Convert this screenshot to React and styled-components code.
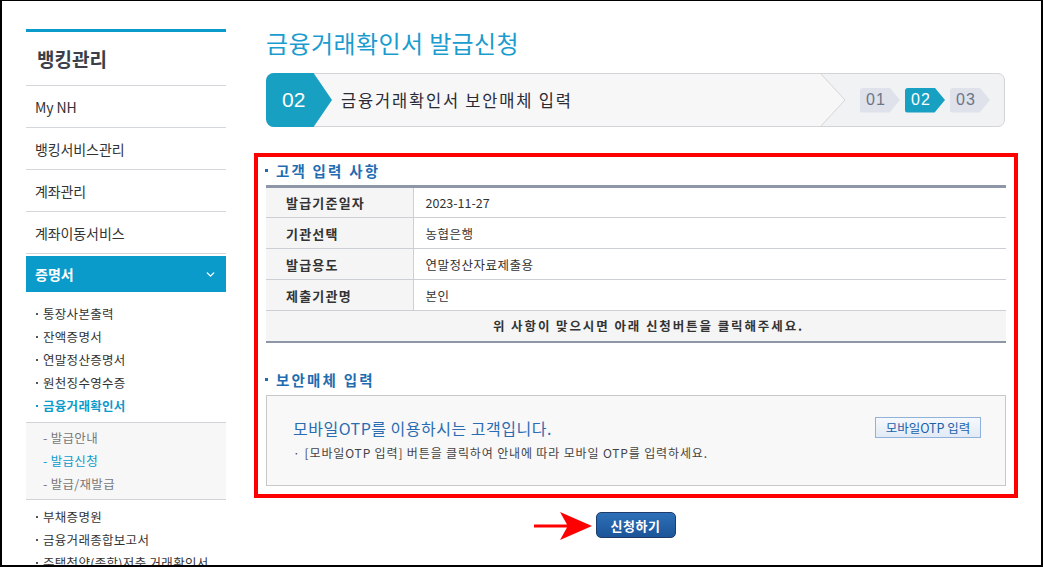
import React from 'react';
import styled, { createGlobalStyle } from 'styled-components';
import { ChevronDown } from 'lucide-react';

const GlobalStyle = createGlobalStyle`
    * { box-sizing: border-box; }
    body {
        margin: 0;
        background: #fff;
        font-family: "Noto Sans CJK KR", "Noto Sans", "Liberation Sans", sans-serif;
        color: #333;
    }
`;

const Frame = styled.div`
    width: 1043px;
    height: 567px;
    border: 2px solid #000;
    border-top-width: 1px;
    overflow: hidden;
    display: flex;
    align-items: flex-start;
`;

// sidebar
const Sidebar = styled.aside`
    width: 200px;
    margin-left: 24px;
    padding-top: 28px;
    flex-shrink: 0;
`;

const SideTitle = styled.h2`
    margin: 0;
    height: 57px;
    border-top: 3px solid #0b9bcb;
    border-bottom: 1px solid #d3d6db;
    padding-left: 11px;
    display: flex;
    align-items: center;
    font-size: 19px;
    font-weight: 700;
    color: #3a3f4a;
    letter-spacing: 0;
`;

const SideItem = styled.div`
    height: 42px;
    border-bottom: 1px solid #d3d6db;
    padding-left: 9px;
    display: flex;
    align-items: center;
    font-size: 14px;
    color: #333;
    letter-spacing: -0.1px;
`;

const SideActive = styled.div`
    margin-top: 2px;
    height: 36px;
    background: #0b9bcb;
    color: #fff;
    font-weight: 700;
    font-size: 14px;
    padding: 0 9px;
    display: flex;
    align-items: center;
    justify-content: space-between;
`;

const SubList = styled.ul`
    list-style: none;
    margin: 0;
    padding: ${({ $top }) => $top || 0}px 0 0;
`;

const SubItem = styled.li`
    position: relative;
    height: 23px;
    line-height: 23px;
    padding-left: 17px;
    font-size: 12.5px;
    white-space: nowrap;
    letter-spacing: 0.3px;
    color: ${({ $on }) => ($on ? '#0b9bcb' : '#333')};
    font-weight: ${({ $on }) => ($on ? 700 : 400)};

    &::before {
        content: '';
        position: absolute;
        left: 10px;
        top: 11px;
        width: 2px;
        height: 2px;
        background: ${({ $on }) => ($on ? '#0b9bcb' : '#555')};
    }
`;

const SubBox = styled.ul`
    list-style: none;
    margin: 5px 0 5px;
    padding: 3px 0 4px;
    background: #f7f7f7;
    border-top: 1px solid #d0d3d8;
    border-bottom: 1px solid #d0d3d8;
`;

const SubSubItem = styled.li`
    height: 23px;
    line-height: 23px;
    padding-left: 17px;
    font-size: 12.5px;
    letter-spacing: 0.3px;
    color: ${({ $on }) => ($on ? '#0b9bcb' : '#777')};
`;

// main column
const Main = styled.main`
    width: 739px;
    margin-left: 40px;
    padding-top: 27px;
`;

const PageTitle = styled.h1`
    margin: 0 0 15px;
    height: 30px;
    line-height: 30px;
    font-size: 24px;
    font-weight: 400;
    color: #1b9ccf;
    letter-spacing: 0.4px;
`;

const StepBar = styled.div`
    height: 54px;
    display: flex;
    align-items: stretch;
    border: 1px solid #d2d4d8;
    border-radius: 7px;
    background: #f1f2f4;
`;

const BadgeWrap = styled.div`
    display: flex;
    z-index: 1;
`;

const StepBadge = styled.div`
    width: 66px;
    margin: -1px 0 -1px -1px;
    background: #17a0c1;
    border-radius: 8px 0 0 8px;
    clip-path: polygon(0 0, 72% 0, 100% 50%, 72% 100%, 0 100%);
    color: #fff;
    font-size: 21px;
    font-family: "Liberation Sans", Arial, sans-serif;
    display: flex;
    align-items: center;
    padding-left: 16px;
`;

const StepLabel = styled.div`
    flex: 1;
    display: flex;
    align-items: center;
    margin-left: -66px;
    padding-left: 75px;
    background: #f7f7f7;
    border-radius: 7px 0 0 7px;
    font-size: 16.5px;
    color: #2a2a35;
    letter-spacing: 1.8px;
    z-index: 0;
`;

const Divider = styled.svg`
    width: 26px;
    flex-shrink: 0;
    display: block;
`;

const MiniSteps = styled.div`
    display: flex;
    align-items: center;
    gap: 5px;
    padding: 0 14px;
`;

const MiniStep = styled.span`
    width: 40px;
    height: 25px;
    padding-right: 8px;
    display: flex;
    align-items: center;
    justify-content: center;
    border-radius: 3px 0 0 3px;
    clip-path: polygon(0 0, 74% 0, 100% 50%, 74% 100%, 0 100%);
    background: ${({ $on }) => ($on ? '#17a0c1' : '#dfe2ea')};
    color: ${({ $on }) => ($on ? '#fff' : '#6c7488')};
    font-size: 16px;
    font-family: "Liberation Sans", Arial, sans-serif;
    letter-spacing: 1px;
`;

const RedBox = styled.section`
    margin: 26px -13px 0 -12px;
    border: 4px solid #ff0000;
    padding: 3px 8px 8px 8px;
`;

const SectionHead = styled.h3`
    margin: ${({ $gap }) => $gap || 0}px 0 5px;
    height: 20px;
    display: flex;
    align-items: center;
    gap: 8px;
    font-size: 14.5px;
    font-weight: 700;
    color: #1f6cb0;
    letter-spacing: 2.2px;

    &::before {
        content: '';
        width: 3px;
        height: 3px;
        margin-left: -1px;
        background: #1f6cb0;
    }
`;

const Table = styled.table`
    width: 100%;
    border-collapse: collapse;
    border-top: 3px solid #8e97a8;
    border-bottom: 2px solid #8e97a8;
    font-size: 12.5px;
`;

const Row = styled.tr`
    height: 31px;
    border-bottom: 1px solid #ccd0d6;

    &:last-child { border-bottom: 0; }
`;

const Th = styled.th`
    width: 147px;
    background: #f5f5f5;
    border-right: 1px solid #ccd0d6;
    text-align: left;
    padding: 0 0 0 20px;
    font-size: 13px;
    font-weight: 700;
    color: #333;
    letter-spacing: 1.2px;
`;

const Td = styled.td`
    padding: 0 0 0 12px;
    color: #333;
    letter-spacing: ${({ $num }) => ($num ? '0' : '0.5px')};
`;

const NoteCell = styled.td`
    background: #f5f5f5;
    text-align: center;
    font-weight: 700;
    font-size: 12.5px;
    color: #333;
    letter-spacing: 1.9px;
    padding-left: 26px;
`;

const OtpBox = styled.div`
    height: 91px;
    background: #f8f8f8;
    border: 1px solid #c8c8c8;
    padding: 21px 24px 0 26px;
`;

const OtpRow = styled.div`
    display: flex;
    align-items: center;
    justify-content: space-between;
    height: 22px;
`;

const OtpTitle = styled.p`
    margin: 0;
    font-size: 16px;
    color: #2a6cb2;
    letter-spacing: 0.5px;
`;

const OtpButton = styled.button`
    width: 106px;
    height: 21px;
    border: 1px solid #90b1d9;
    background: linear-gradient(#f6f9fd, #e2eaf5);
    color: #2060aa;
    font-family: inherit;
    font-size: 12.5px;
    padding: 0;
    line-height: 19px;
`;

const OtpNotice = styled.p`
    margin: 5px 0 0;
    font-size: 12px;
    color: #444;
    line-height: 18px;
    letter-spacing: 0.85px;

    &::before {
        content: '·';
        margin-right: 4px;
    }
`;

const Actions = styled.div`
    display: flex;
    justify-content: center;
    margin-top: 14px;
`;

const SubmitWrap = styled.div`
    position: relative;
`;

const Arrow = styled.svg`
    position: absolute;
    right: calc(100% + 4px);
    top: -1px;
`;

const SubmitButton = styled.button`
    width: 80px;
    height: 26px;
    border: 1px solid #1c3d6c;
    border-radius: 5px;
    background: linear-gradient(#2d70b8, #1c5498);
    color: #fff;
    font-family: inherit;
    font-size: 13px;
    font-weight: 700;
    letter-spacing: 0.5px;
    padding: 0;
`;

const rows = [
    ['발급기준일자', '2023-11-27', true],
    ['기관선택', '농협은행'],
    ['발급용도', '연말정산자료제출용'],
    ['제출기관명', '본인'],
];

const App = () => {
    return (
        <>
            <GlobalStyle />
            <Frame>
                <Sidebar>
                    <SideTitle>뱅킹관리</SideTitle>
                    <SideItem>My NH</SideItem>
                    <SideItem>뱅킹서비스관리</SideItem>
                    <SideItem>계좌관리</SideItem>
                    <SideItem>계좌이동서비스</SideItem>
                    <SideActive>
                        증명서
                        <ChevronDown size={13} strokeWidth={2.5} />
                    </SideActive>
                    <SubList $top={10}>
                        <SubItem>통장사본출력</SubItem>
                        <SubItem>잔액증명서</SubItem>
                        <SubItem>연말정산증명서</SubItem>
                        <SubItem>원천징수영수증</SubItem>
                        <SubItem $on>금융거래확인서</SubItem>
                    </SubList>
                    <SubBox>
                        <SubSubItem>- 발급안내</SubSubItem>
                        <SubSubItem $on>- 발급신청</SubSubItem>
                        <SubSubItem>- 발급/재발급</SubSubItem>
                    </SubBox>
                    <SubList>
                        <SubItem>부채증명원</SubItem>
                        <SubItem>금융거래종합보고서</SubItem>
                        <SubItem>주택청약(종합)저축 거래확인서</SubItem>
                    </SubList>
                </Sidebar>

                <Main>
                    <PageTitle>금융거래확인서 발급신청</PageTitle>

                    <StepBar>
                        <BadgeWrap>
                            <StepBadge>02</StepBadge>
                        </BadgeWrap>
                        <StepLabel>금융거래확인서 보안매체 입력</StepLabel>
                        <Divider viewBox="0 0 26 54" preserveAspectRatio="none">
                            <polygon points="0,0 1,0 25,27 1,54 0,54" fill="#f7f7f7" />
                            <polyline points="1,0 25,27 1,54" fill="none" stroke="#d2d4d8" strokeWidth="1" />
                        </Divider>
                        <MiniSteps>
                            <MiniStep>01</MiniStep>
                            <MiniStep $on>02</MiniStep>
                            <MiniStep>03</MiniStep>
                        </MiniSteps>
                    </StepBar>

                    <RedBox>
                        <SectionHead>고객 입력 사항</SectionHead>
                        <Table>
                            <tbody>
                                {rows.map(([label, value, num]) => (
                                    <Row key={label}>
                                        <Th>{label}</Th>
                                        <Td $num={num}>{value}</Td>
                                    </Row>
                                ))}
                                <Row>
                                    <NoteCell colSpan={2}>위 사항이 맞으시면 아래 신청버튼을 클릭해주세요.</NoteCell>
                                </Row>
                            </tbody>
                        </Table>

                        <SectionHead $gap={27}>보안매체 입력</SectionHead>
                        <OtpBox>
                            <OtpRow>
                                <OtpTitle>모바일OTP를 이용하시는 고객입니다.</OtpTitle>
                                <OtpButton>모바일OTP 입력</OtpButton>
                            </OtpRow>
                            <OtpNotice>[모바일OTP 입력] 버튼을 클릭하여 안내에 따라 모바일 OTP를 입력하세요.</OtpNotice>
                        </OtpBox>
                    </RedBox>

                    <Actions>
                        <SubmitWrap>
                            <Arrow width="58" height="30" viewBox="0 0 58 30">
                                <path d="M0 13.5 H33 L26 1 L58 15 L26 29 L33 16.5 H0 Z" fill="#ff0000" />
                            </Arrow>
                            <SubmitButton>신청하기</SubmitButton>
                        </SubmitWrap>
                    </Actions>
                </Main>
            </Frame>
        </>
    );
};

export default App;
